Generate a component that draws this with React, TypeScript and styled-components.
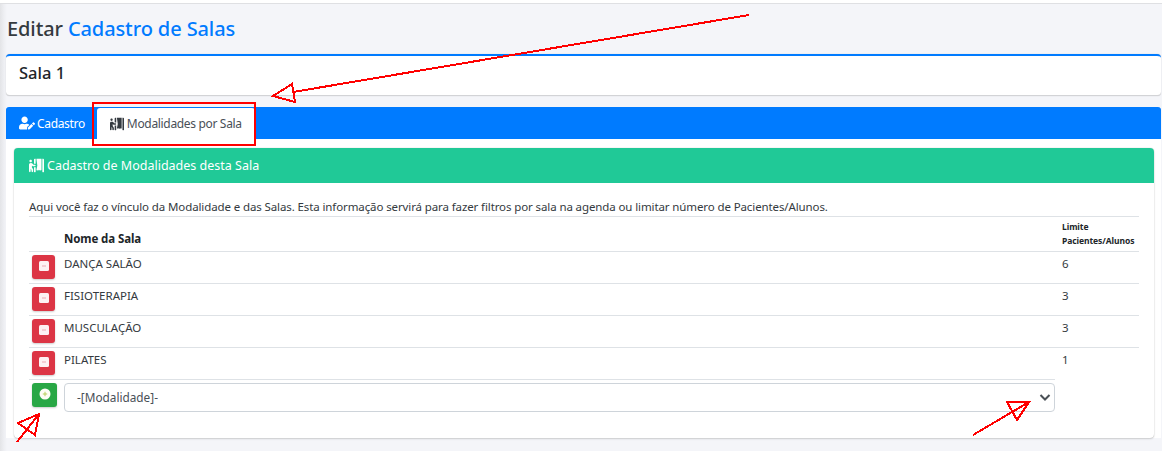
import React from 'react';
import styled, { createGlobalStyle } from 'styled-components';
import { FaPersonBooth, FaUserEdit } from 'react-icons/fa';

const GlobalStyle = createGlobalStyle`
    html, body {
        margin: 0;
        padding: 0;
        background: #fff;
        font-family: "Noto Sans", "Open Sans", sans-serif;
        color: #212529;
    }
`;

const Page = styled.div`
    position: relative;
    width: 1162px;
    height: 448px;
    overflow: hidden;
    box-sizing: border-box;
    background: linear-gradient(90deg, #e3e4e7 0, #eeeff3 4px, #f4f5f9 7px);
    border-top: 1px solid #dfe0e3;
    margin-top: 3px;
    padding: 0 1px 0 6px;
`;

const Title = styled.h1`
    margin: 0;
    height: 50px;
    box-sizing: border-box;
    padding: 0 0 2px 1px;
    display: flex;
    align-items: center;
    gap: 5px;
    font-size: 20px;
    font-weight: 500;
    color: #343a40;
    letter-spacing: -0.1px;

    span {
        color: #007bff;
    }
`;

const NameCard = styled.div`
    height: 42px;
    box-sizing: border-box;
    display: flex;
    align-items: center;
    padding: 0 0 7px 13px;
    background: #fff;
    border-top: 2px solid #007bff;
    border-bottom: 1px solid #d2d3d6;
    border-radius: 4px;
    box-shadow: 0 0 1px rgba(0, 0, 0, 0.25);
    font-size: 16.5px;
    font-weight: 500;
`;

const TabsPanel = styled.div`
    margin-top: 11px;
    background: #fff;
`;

const TabBar = styled.div`
    height: 32px;
    background: #007bff;
    border-radius: 3px 3px 0 0;
    display: flex;
    align-items: flex-end;
    padding-left: 4px;
`;

const Tab = styled.div<{ $active?: boolean }>`
    height: ${p => (p.$active ? 31 : 32)}px;
    box-sizing: border-box;
    display: flex;
    align-items: center;
    gap: ${p => (p.$active ? 3 : 2)}px;
    padding: 0 ${p => (p.$active ? 13 : 12)}px 0 ${p => (p.$active ? 13 : 9)}px;
    font-size: 12px;
    letter-spacing: -0.33px;
    color: ${p => (p.$active ? '#495057' : '#fff')};
    background: ${p => (p.$active ? '#fff' : 'transparent')};
    border-radius: 3px 3px 0 0;

    svg {
        font-size: ${p => (p.$active ? 14 : 16)}px;
        color: ${p => (p.$active ? '#343a40' : '#fff')};
    }
`;

const TabBody = styled.div`
    padding: 9px 7px 0 8px;
`;

const ModalCard = styled.div`
    height: 290px;
    box-sizing: border-box;
    background: #fff;
    border-radius: 4px;
    box-shadow: 0 0 1px rgba(0, 0, 0, 0.3), 0 1px 2px rgba(0, 0, 0, 0.15);
`;

const ModalHeader = styled.div`
    height: 35px;
    display: flex;
    align-items: center;
    gap: 3px;
    padding-left: 15px;
    background: #20c997;
    border-radius: 4px 4px 0 0;
    color: #fff;
    font-size: 12.5px;

    svg {
        font-size: 15px;
    }
`;

const ModalBody = styled.div`
    padding: 16px 15px 0 15px;
`;

const Intro = styled.p`
    margin: 0;
    height: 17px;
    line-height: 16px;
    font-size: 11.5px;
    letter-spacing: -0.11px;
    color: #343a40;
`;

const Row = styled.div<{ $head?: boolean }>`
    display: grid;
    grid-template-columns: 35px 998px 1fr;
    height: ${p => (p.$head ? 35 : 32)}px;
    box-sizing: border-box;
    border-top: 1px solid #dee2e6;
    font-size: 11.5px;
    color: #343a40;
`;

const ActionCell = styled.div`
    padding: 3px 0 0 3px;
`;

const NameCell = styled.div`
    padding-top: 4px;
    line-height: 16px;
`;

const LimitCell = styled.div`
    padding-top: 4px;
    line-height: 16px;
`;

const HeadName = styled.div`
    grid-column: 2;
    align-self: end;
    padding-bottom: 4px;
    font-weight: 700;
    line-height: 16px;
    letter-spacing: -0.1px;
    color: #212529;
`;

const HeadLimit = styled.div`
    grid-column: 3;
    padding-top: 3px;
    font-size: 8.5px;
    line-height: 14px;
    font-weight: 700;
    letter-spacing: -0.07px;
    white-space: nowrap;
    color: #212529;
`;

const SquareButton = styled.button<{ $color: string; $width: number }>`
    display: flex;
    align-items: center;
    justify-content: center;
    width: ${p => p.$width}px;
    height: 24px;
    padding: 0 0 2px;
    border: none;
    border-radius: 3px;
    background: ${p => p.$color};
    box-shadow: 0 1px 2px rgba(0, 0, 0, 0.2);
`;

const AddRow = styled.div`
    display: grid;
    grid-template-columns: 35px 991px;
    width: 1026px;
    border-top: 1px solid #dee2e6;
    height: 33px;
`;

const SelectBox = styled.div`
    margin-top: 3px;
    height: 29px;
    box-sizing: border-box;
    display: flex;
    align-items: center;
    justify-content: space-between;
    padding: 0 2px 2px 12px;
    background: #fff;
    border: 1px solid #ced4da;
    border-radius: 4px;
    font-size: 11.8px;
    color: #495057;
`;

const Annotations = styled.svg`
    position: absolute;
    left: 0;
    top: -4px;
    width: 1162px;
    height: 451px;
    pointer-events: none;
`;

const MinusIcon = () => (
    <svg width="10" height="10" viewBox="0 0 10 10">
        <rect width="10" height="10" rx="1.500" fill="#fdf1f3" />
        <rect x="3" y="4.500" width="4" height="1" fill="#eba9b3" />
    </svg>
);

const PlusIcon = () => (
    <svg width="12" height="12" viewBox="0 0 12 12">
        <circle cx="6" cy="6" r="5.500" fill="#fdfdf5" />
        <path d="M6 3.800v4.400M3.800 6h4.400" stroke="#b6cf5c" strokeWidth="1" />
    </svg>
);

const Chevron = () => (
    <svg width="14" height="14" viewBox="0 0 14 14">
        <path d="M2.500 5l4.500 4.500L11.500 5" fill="none" stroke="#4a5056" strokeWidth="2" />
    </svg>
);

const rooms = [
    { name: 'DANÇA SALÃO', limit: 6 },
    { name: 'FISIOTERAPIA', limit: 3 },
    { name: 'MUSCULAÇÃO', limit: 3 },
    { name: 'PILATES', limit: 1 },
];

const App = () => (
    <Page>
        <GlobalStyle />
        <Title>Editar <span>Cadastro de Salas</span></Title>
        <NameCard>Sala 1</NameCard>
        <TabsPanel>
            <TabBar>
                <Tab><FaUserEdit /> Cadastro</Tab>
                <Tab $active><FaPersonBooth /> Modalidades por Sala</Tab>
            </TabBar>
            <TabBody>
                <ModalCard>
                    <ModalHeader><FaPersonBooth /> Cadastro de Modalidades desta Sala</ModalHeader>
                    <ModalBody>
                        <Intro>Aqui você faz o vínculo da Modalidade e das Salas. Esta informação servirá para fazer filtros por sala na agenda ou limitar número de Pacientes/Alunos.</Intro>
                        <Row $head>
                            <HeadName>Nome da Sala</HeadName>
                            <HeadLimit>Limite<br />Pacientes/Alunos</HeadLimit>
                        </Row>
                        {rooms.map(room => (
                            <Row key={room.name}>
                                <ActionCell>
                                    <SquareButton $color="#dc3545" $width={23}><MinusIcon /></SquareButton>
                                </ActionCell>
                                <NameCell>{room.name}</NameCell>
                                <LimitCell>{room.limit}</LimitCell>
                            </Row>
                        ))}
                        <AddRow>
                            <ActionCell>
                                <SquareButton $color="#28a745" $width={25}><PlusIcon /></SquareButton>
                            </ActionCell>
                            <SelectBox>-[Modalidade]-<Chevron /></SelectBox>
                        </AddRow>
                    </ModalBody>
                </ModalCard>
            </TabBody>
        </TabsPanel>
        <Annotations viewBox="0 0 1162 451" fill="none" stroke="#f00" strokeWidth="2" shapeRendering="crispEdges">
            <path d="M749 15L293 92" />
            <path d="M273 96L292 84L295 102Z" />
            <rect x="93" y="103" width="162" height="42" />
            <path d="M17 442L39 414M18 423L39 414L35 435Z" />
            <path d="M973 435L1029 402M1007 402L1029 402L1017 420Z" />
        </Annotations>
    </Page>
);

export default App;
